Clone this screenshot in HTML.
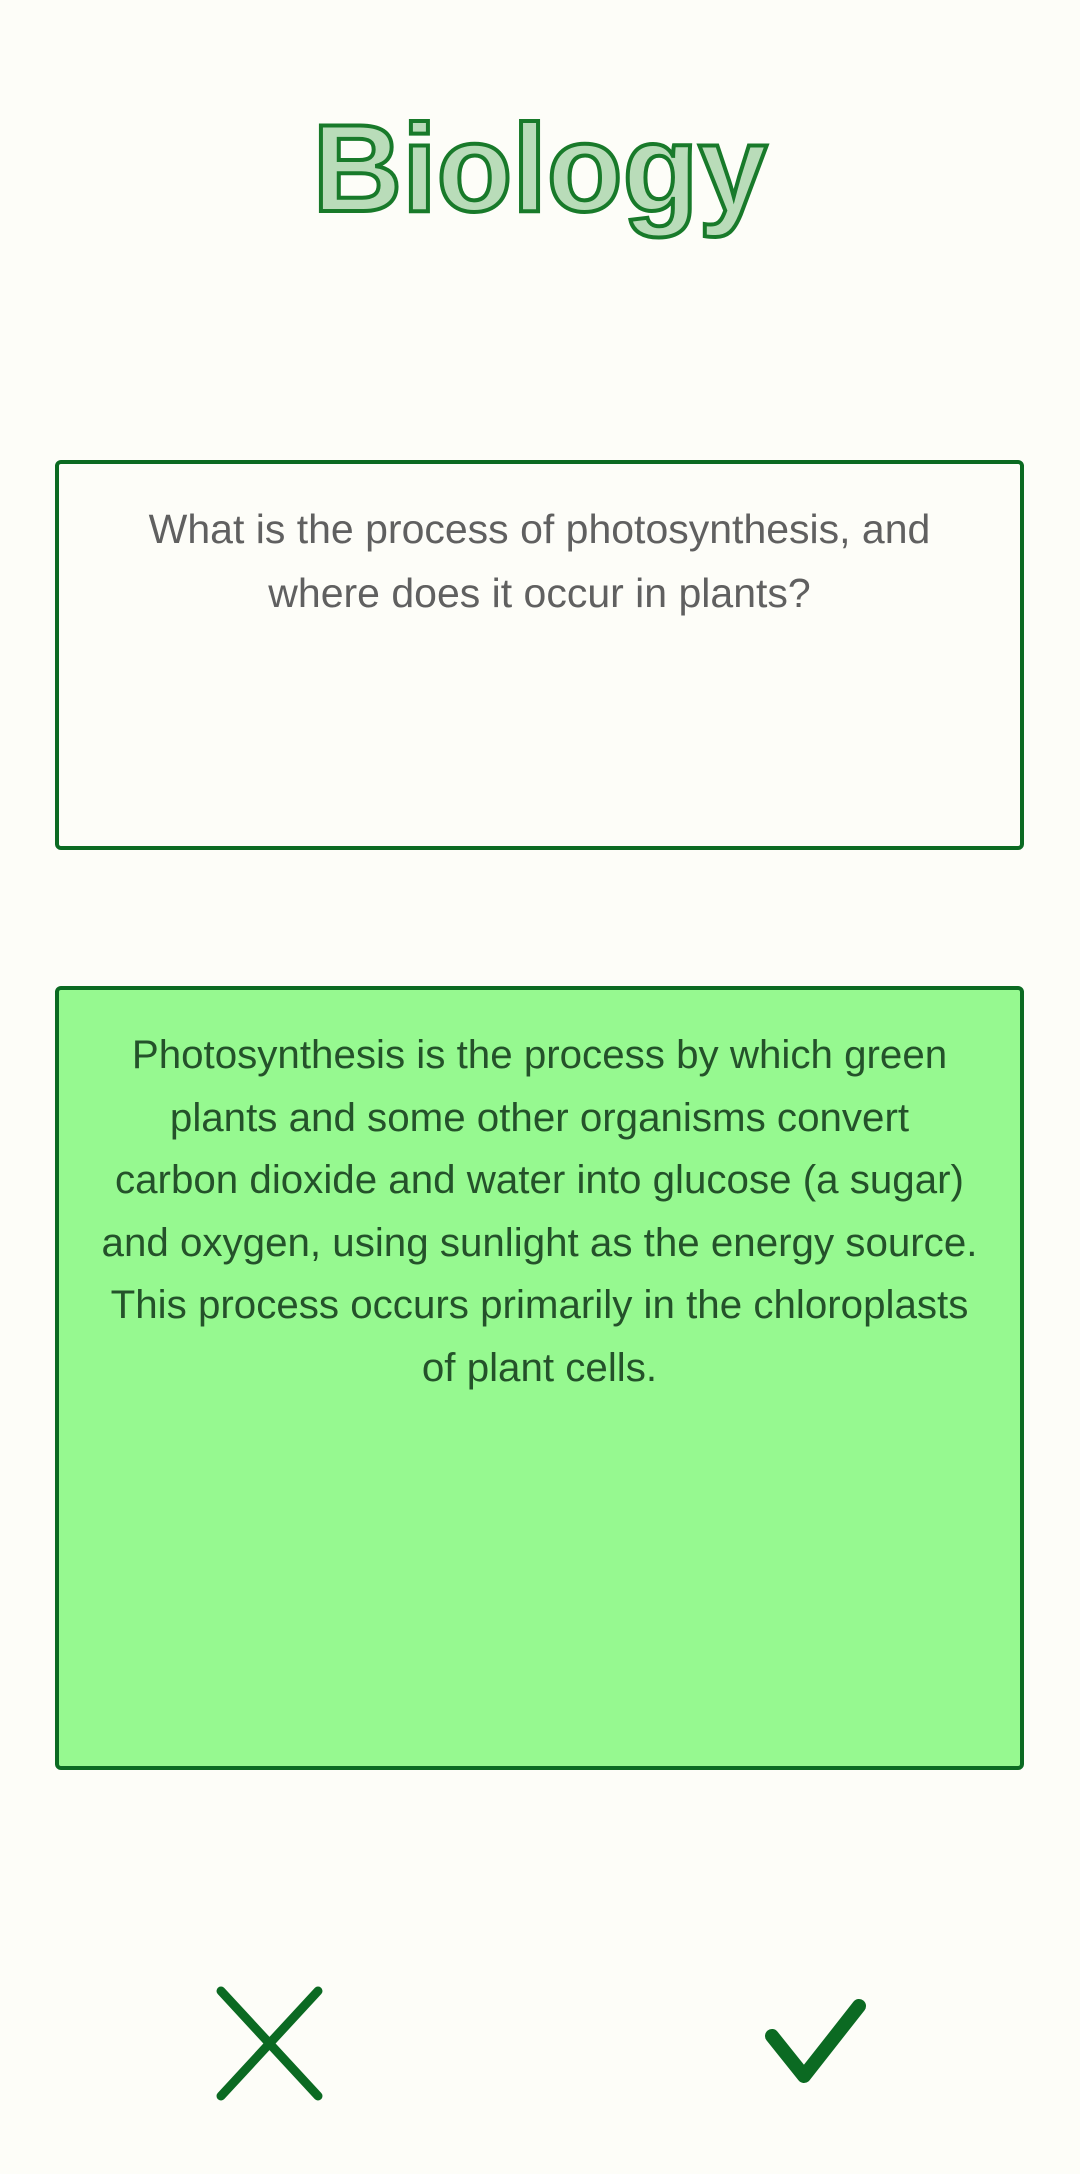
<!DOCTYPE html>
<html><head><meta charset="utf-8"><style>
html,body{margin:0;padding:0;background:#fdfdf8;}
body{width:1080px;height:2174px;position:relative;overflow:hidden;font-family:"Liberation Sans",sans-serif;}
.title{position:absolute;top:84px;left:0;width:1080px;text-align:center;font-size:124px;font-weight:bold;color:#b9dcb9;-webkit-text-stroke:4px #187a2a;line-height:170px;}
.card{position:absolute;left:55px;width:969px;border:4px solid #0b6a22;border-radius:6px;box-sizing:border-box;text-align:center;}
.q{top:460px;height:390px;background:#fdfdf8;}
.a{top:986px;height:784px;background:#96f990;}
.q p{margin:0;padding:33px 0 0;font-size:41px;line-height:64px;color:#606060;white-space:nowrap;}
.a p{margin:0;padding:34px 0 0;font-size:40.3px;line-height:62.5px;color:#24522a;white-space:nowrap;}
</style></head><body>
<div class="title">Biology</div>
<div class="card q"><p>What is the process of photosynthesis, and<br>where does it occur in plants?</p></div>
<div class="card a"><p>Photosynthesis is the process by which green<br>plants and some other organisms convert<br>carbon dioxide and water into glucose (a sugar)<br>and oxygen, using sunlight as the energy source.<br>This process occurs primarily in the chloroplasts<br>of plant cells.</p></div>
<svg style="position:absolute;left:0;top:0" width="1080" height="2174">
<g stroke="#0b6a22" stroke-linecap="round" fill="none">
<path d="M221 1991 L318 2096 M318 1991 L221 2096" stroke-width="9"/>
<path d="M772 2036 L804 2076 L859 2006" stroke-width="14" stroke-linejoin="round"/>
</g></svg>
</body></html>
